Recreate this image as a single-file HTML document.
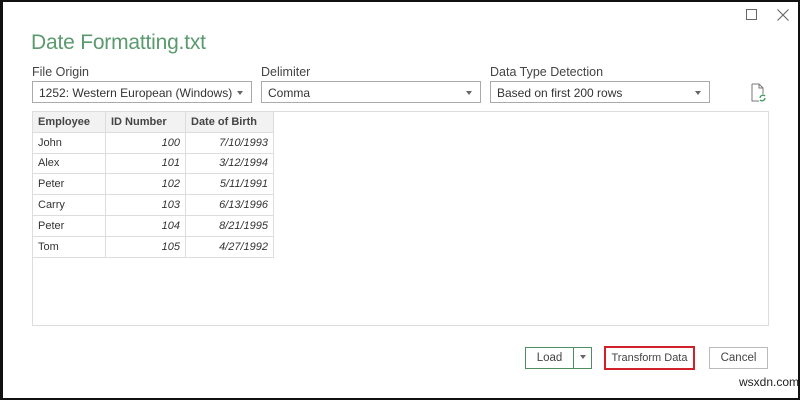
<!DOCTYPE html>
<html><head><style>
*{box-sizing:border-box;margin:0;padding:0}
body{width:800px;height:400px;background:#fff;font-family:"Liberation Sans",sans-serif;position:relative;overflow:hidden;color:#333}
.frame{position:absolute;left:0;top:0;width:800px;height:400px;border:2px solid #111;border-left-width:3px}
.abs{position:absolute;white-space:nowrap}
.lbl{font-size:12.5px;color:#444}
.dd{position:absolute;height:22px;border:1px solid #aaa;font-size:12px;padding:4px 6px;color:#333;white-space:nowrap;overflow:hidden}
.dd:after{content:"";position:absolute;right:8px;top:9px;border:3.5px solid transparent;border-top:4px solid #666}
table{border-collapse:collapse;font-size:11px;position:absolute;left:32px;top:111px}
td{border:1px solid #ddd;height:20.8px;padding:0 5px;color:#333}
tr:first-child td{background:#f2f2f2;font-weight:bold;color:#444}
td.n{text-align:right;font-style:italic}
.btn{position:absolute;height:22px;font-size:11.5px;text-align:center;line-height:20px;color:#444;border:1px solid #bbb;white-space:nowrap}
</style></head><body>
<div class="frame"></div>
<div class="abs" style="left:746px;top:9px;width:11px;height:11px;border:1px solid #666"></div>
<svg class="abs" style="left:777px;top:9px" width="12" height="12"><path d="M0.5 0.5L11.5 11.5M11.5 0.5L0.5 11.5" stroke="#666" stroke-width="1.1"/></svg>
<div class="abs" style="left:31px;top:31px;font-size:21px;color:#5a9a6e;letter-spacing:-0.2px">Date Formatting.txt</div>
<div class="abs lbl" style="left:32px;top:65px">File Origin</div>
<div class="abs lbl" style="left:261px;top:65px">Delimiter</div>
<div class="abs lbl" style="left:490px;top:65px">Data Type Detection</div>
<div class="dd" style="left:32px;top:81px;width:220px">1252: Western European (Windows)</div>
<div class="dd" style="left:261px;top:81px;width:220px">Comma</div>
<div class="dd" style="left:490px;top:81px;width:220px">Based on first 200 rows</div>
<svg class="abs" style="left:750px;top:83px" width="18" height="20" viewBox="0 0 18 20"><path d="M2 1h7l4 4v6M2 1v17h7" fill="none" stroke="#777"/><path d="M9 1v4h4" fill="none" stroke="#777"/><path d="M10 15a3 3 0 0 1 5-2M15 15a3 3 0 0 1-5 2" fill="none" stroke="#3a9a5b" stroke-width="1.3"/></svg>
<div class="abs" style="left:32px;top:111px;width:737px;height:215px;border:1px solid #ddd"></div>
<table>
<tr><td style="width:73px">Employee</td><td style="width:80px">ID Number</td><td style="width:88px">Date of Birth</td></tr>
<tr><td>John</td><td class="n">100</td><td class="n">7/10/1993</td></tr>
<tr><td>Alex</td><td class="n">101</td><td class="n">3/12/1994</td></tr>
<tr><td>Peter</td><td class="n">102</td><td class="n">5/11/1991</td></tr>
<tr><td>Carry</td><td class="n">103</td><td class="n">6/13/1996</td></tr>
<tr><td>Peter</td><td class="n">104</td><td class="n">8/21/1995</td></tr>
<tr><td>Tom</td><td class="n">105</td><td class="n">4/27/1992</td></tr>
</table>
<div class="btn" style="left:525px;top:347px;width:49px;border-color:#4e8c62">Load</div>
<div class="btn" style="left:573px;top:347px;width:19px;border-color:#4e8c62"><span style="display:inline-block;border:3.5px solid transparent;border-top:4px solid #666;margin-top:7px"></span></div>
<div class="btn" style="left:604px;top:346px;width:91px;height:24px;border:2px solid #d0202a;line-height:20px;font-size:11px">Transform Data</div>
<div class="btn" style="left:709px;top:347px;width:59px">Cancel</div>
<div class="abs" style="left:739px;top:375px;font-size:12px;color:#222">wsxdn.com</div>
</body></html>
